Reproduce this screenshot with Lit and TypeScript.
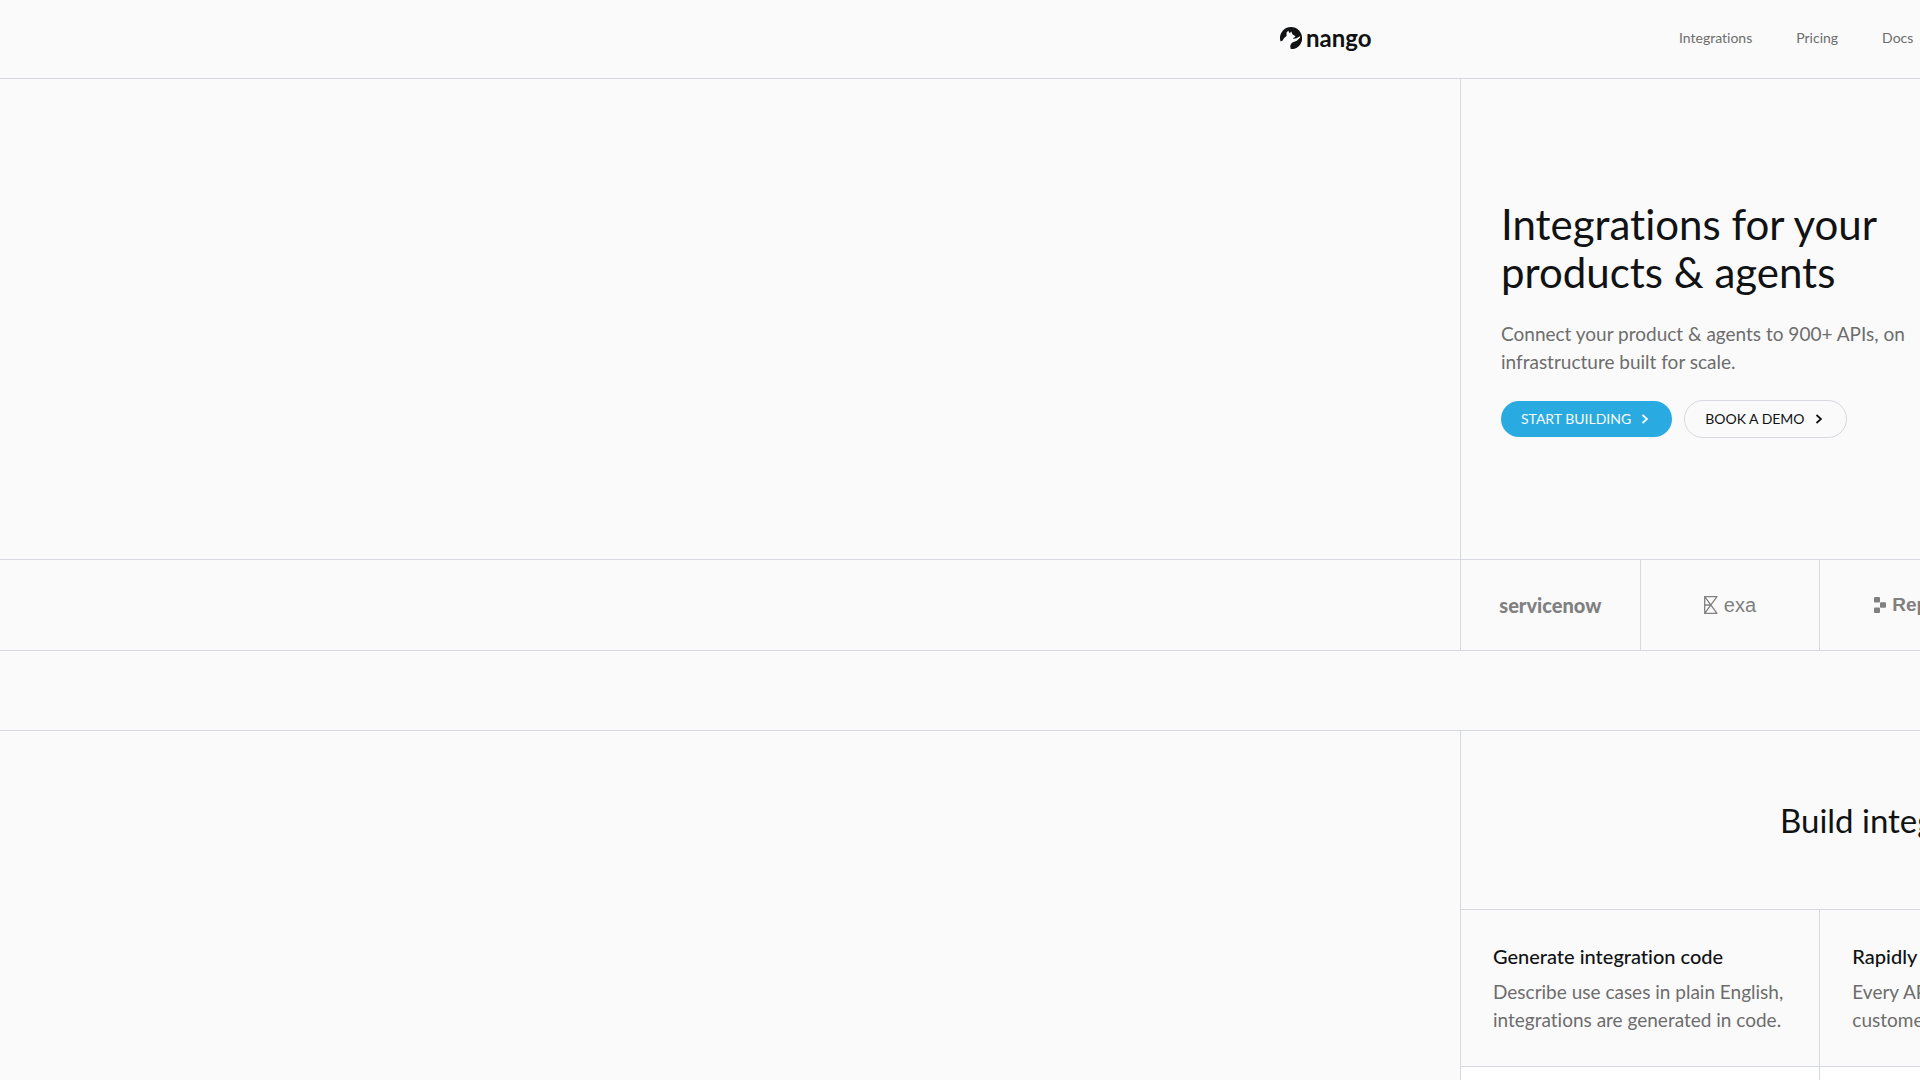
import { LitElement, html, css, svg } from "lit";
import { customElement } from "lit/decorators.js";

const wolfMark = svg`
  <circle cx="32" cy="32" r="32" fill="#101214"></circle>
  <path fill="#fafafa" d="M-2 43 L7 40 L12 32 L19 26 L19 16 L24 11 L28 18 L33 13 L36 21 L45 27 L41 31 L37 32 L40 34 L48 33 L58 27 L60 30 L47 42 L37 46 L31 52 L31 66 L-2 66 Z"></path>
  <path fill="#101214" d="M64 32 C64 52 50 64 34 64 C28 58 30 48 38 44 C50 41 57 36 60 28 Z"></path>`;

const chevron = svg`<path d="M1.5 1 L6 5 L1.5 9" fill="none" stroke="currentColor" stroke-width="1.8"></path>`;

const navLinks = ["Integrations", "Pricing", "Docs"];

const features = [
  {
    title: "Generate integration code",
    lines: ["Describe use cases in plain English,", "integrations are generated in code."],
  },
  { title: "Rapidly", lines: ["Every API", "customer"] },
];

@customElement("app-root")
export class AppRoot extends LitElement {
  static styles = css`
    :host {
      --line: #d6d9df;
      --ink: #101214;
      --muted: #6d6d6d;
      --brand: #808080;
      display: flex;
      flex-direction: column;
      align-items: flex-start;
      min-height: 100vh;
      overflow: hidden;
      background: #fafafa;
      color: var(--ink);
      font-family: Lato, "Open Sans", sans-serif;
      font-variant-ligatures: none;
    }
    * {
      box-sizing: border-box;
      margin: 0;
    }
    a {
      color: inherit;
      text-decoration: none;
    }
    header,
    main {
      width: calc(100vw + 2080px);
    }
    main {
      flex: 1;
      display: flex;
      flex-direction: column;
    }
    header {
      border-bottom: 1px solid var(--line);
    }
    .bar {
      display: flex;
      align-items: center;
      gap: 308px;
      width: 1440px;
      padding: 24px 0 26px;
      margin: 0 auto;
    }
    .logo {
      display: flex;
      align-items: center;
      gap: 4px;
      width: 91px;
      font-size: 24px;
      line-height: 28px;
      font-weight: 700;
    }
    .logo svg {
      width: 22px;
      height: 22px;
      flex: none;
    }
    nav {
      display: flex;
      gap: 44px;
      font-size: 14px;
      line-height: 20px;
      color: var(--muted);
    }
    .band {
      border-bottom: 1px solid var(--line);
    }
    .frame {
      width: 1080px;
      margin: 0 auto;
      border-left: 1px solid var(--line);
      border-right: 1px solid var(--line);
    }
    .hero {
      display: flex;
      flex-direction: column;
      justify-content: center;
      height: 480px;
      padding: 0 40px;
    }
    h1 {
      font-size: 42px;
      line-height: 48px;
      font-weight: 400;
    }
    .lead {
      margin-top: 24px;
      font-size: 19px;
      line-height: 28px;
      color: var(--muted);
      white-space: nowrap;
    }
    .actions {
      display: flex;
      align-items: center;
      gap: 12px;
      margin-top: 24px;
    }
    .button {
      display: flex;
      align-items: center;
      gap: 10px;
      height: 36px;
      padding: 0 24px 0 20px;
      border-radius: 20px;
      font-size: 14px;
      line-height: 20px;
    }
    .button svg {
      width: 7px;
      height: 10px;
    }
    .primary {
      background: #29abe2;
      color: #fafafa;
    }
    .outline {
      height: 38px;
      border: 1px solid var(--line);
    }
    .brands {
      display: grid;
      grid-template-columns: repeat(6, 1fr);
      height: 90px;
      color: var(--brand);
    }
    .brand {
      display: flex;
      align-items: center;
      justify-content: center;
      gap: 6px;
      border-right: 1px solid var(--line);
    }
    .servicenow {
      font-size: 20px;
      font-weight: 900;
    }
    .exa {
      font-family: "Liberation Sans", sans-serif;
      font-size: 20px;
    }
    .replit {
      font-family: "Liberation Sans", sans-serif;
      font-size: 19px;
      font-weight: 700;
    }
    .exa svg {
      width: 14px;
      height: 18px;
    }
    .replit svg {
      width: 12px;
      height: 16px;
    }
    .spacer {
      height: 80px;
    }
    .build {
      flex: 1;
      display: flex;
      flex-direction: column;
    }
    .title {
      padding: 68px 0;
      border-bottom: 1px solid var(--line);
    }
    h2 {
      width: 440px;
      margin: 0 auto;
      font-size: 33px;
      line-height: 42px;
      font-weight: 400;
    }
    .cards {
      flex: 1;
      display: grid;
      grid-template-columns: repeat(3, 1fr);
      grid-template-rows: auto 1fr;
    }
    .card {
      padding: 32px;
      border-right: 1px solid var(--line);
      border-bottom: 1px solid var(--line);
    }
    .media {
      background: #fff;
      border-right: 1px solid var(--line);
    }
    h3 {
      font-size: 20px;
      line-height: 28px;
      font-weight: 500;
    }
    .copy {
      margin-top: 8px;
      font-size: 19px;
      line-height: 28px;
      color: var(--muted);
      white-space: nowrap;
    }
  `;

  render() {
    return html`
      <header>
        <div class="bar">
          <a class="logo" href="#"><svg viewBox="0 0 64 64" aria-hidden="true">${wolfMark}</svg>nango</a>
          <nav>${navLinks.map((label) => html`<a href="#">${label}</a>`)}</nav>
        </div>
      </header>
      <main>
        <section class="band">
          <div class="frame hero">
            <h1>Integrations for your<br />products &amp; agents</h1>
            <p class="lead">Connect your product &amp; agents to 900+ APIs, on<br />infrastructure built for scale.</p>
            <div class="actions">
              <a class="button primary" href="#">START BUILDING<svg viewBox="0 0 7 10" aria-hidden="true">${chevron}</svg></a>
              <a class="button outline" href="#">BOOK A DEMO<svg viewBox="0 0 7 10" aria-hidden="true">${chevron}</svg></a>
            </div>
          </div>
        </section>
        <section class="band">
          <div class="frame brands">
            <div class="brand servicenow">servicenow</div>
            <div class="brand exa">
              <svg viewBox="0 0 14 18" fill="none" stroke="currentColor" stroke-width="1.3" aria-hidden="true">
                <path d="M13.5 .7 H.7 V17.3 H13.5 M.7 9 H7 M.7 .7 L13 17.3 M13 .7 L.7 17.3"></path>
              </svg>
              exa
            </div>
            <div class="brand replit">
              <svg viewBox="0 0 12 16" fill="currentColor" aria-hidden="true">
                <rect width="6" height="5.4" rx="1"></rect>
                <rect x="6" y="5.3" width="6" height="5.4" rx="1"></rect>
                <rect y="10.6" width="6" height="5.4" rx="1"></rect>
              </svg>
              Replit
            </div>
          </div>
        </section>
        <div class="band spacer"></div>
        <section class="frame build">
          <div class="title"><h2>Build integrations</h2></div>
          <div class="cards">
            ${features.map(
              (f) => html`<article class="card">
                <h3>${f.title}</h3>
                <p class="copy">${f.lines[0]}<br />${f.lines[1]}</p>
              </article>`
            )}
            <div class="card"></div>
            <div class="media"></div>
            <div class="media"></div>
            <div class="media"></div>
          </div>
        </section>
      </main>
    `;
  }
}
